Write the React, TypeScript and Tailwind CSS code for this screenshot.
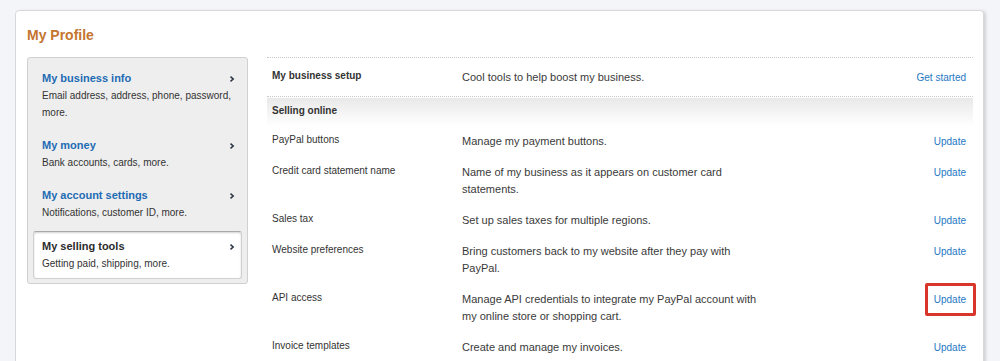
import React from 'react'

const sideItems = [
  { title: 'My business info', desc: 'Email address, address, phone, password, more.' },
  { title: 'My money', desc: 'Bank accounts, cards, more.' },
  { title: 'My account settings', desc: 'Notifications, customer ID, more.' },
  { title: 'My selling tools', desc: 'Getting paid, shipping, more.', active: true },
]

const sellingRows = [
  { label: 'PayPal buttons', desc: 'Manage my payment buttons.' },
  { label: 'Credit card statement name', desc: 'Name of my business as it appears on customer card statements.' },
  { label: 'Sales tax', desc: 'Set up sales taxes for multiple regions.' },
  { label: 'Website preferences', desc: 'Bring customers back to my website after they pay with PayPal.' },
  { label: 'API access', desc: 'Manage API credentials to integrate my PayPal account with my online store or shopping cart.', marked: true },
  { label: 'Invoice templates', desc: 'Create and manage my invoices.' },
]

function Chevron() {
  return (
    <svg width="6" height="8" viewBox="0 0 6 8" className="mr-[1px] mt-[5px] shrink-0">
      <polyline points="1.5,1.6 4.2,4 1.5,6.4" fill="none" stroke="#2a3340" strokeWidth="1.5" />
    </svg>
  )
}

function SideItem({ title, desc, active }: { title: string; desc: string; active?: boolean }) {
  return (
    <div
      className={
        active
          ? 'mt-[2px] rounded-[3px] border border-[#d0d0d0] border-t-[#a9a9a9] bg-white py-[6px] pl-[8px] pr-[5px] shadow-[inset_0_1px_2px_rgba(0,0,0,0.18)]'
          : 'border border-transparent py-[7px] pl-[8px] pr-[5px]'
      }
    >
      <div className="flex items-start justify-between">
        <span className={`text-[11px] font-bold leading-[17px] ${active ? 'text-[#2c2c2c]' : 'text-[#1d6bb4]'}`}>{title}</span>
        <Chevron />
      </div>
      <p className="text-[10px] leading-[17px] text-[#333]">{desc}</p>
    </div>
  )
}

function TableRow({ label, desc, action, bold, marked }: { label: string; desc?: string; action?: string; bold?: boolean; marked?: boolean }) {
  return (
    <div className="flex items-start py-[7px]">
      <div className={`w-[195px] shrink-0 pl-[5px] text-[10px] leading-[13px] text-[#333] ${bold ? 'font-bold' : ''}`}>{label}</div>
      <div className="w-[296px] shrink-0 text-[11px] leading-[17px] text-[#3a3a3a]">{desc}</div>
      <div className="flex flex-1 justify-end pr-[7px]">
        <span className="relative text-[10px] leading-[17px] text-[#2577c4]">
          {action}
          {marked && (
            <span className="absolute -bottom-[8px] -left-[9px] -right-[10px] -top-[8px] rounded-[2px] border-[3px] border-[#d9362b]" />
          )}
        </span>
      </div>
    </div>
  )
}

export default function App() {
  return (
    <div className="h-[361px] overflow-hidden bg-[#f4f5f8] pl-[15px] pr-[16px] pt-[10px] font-['Liberation_Sans',Arial,sans-serif]">
      <div className="min-h-[400px] rounded-[4px] border border-[#d8d8d8] bg-white pl-[11px] pr-[10px] pt-[14px] shadow-[2px_1px_3px_rgba(0,0,0,0.14)]">
        <h1 className="text-[14px] font-bold leading-[20px] text-[#c4752f]">My Profile</h1>

        <div className="mt-[12px] flex gap-[19px]">
          <aside className="w-[221px] shrink-0 self-start rounded-[3px] border border-[#d0d0d0] bg-[#eeeeee] px-[5px] pb-[4px] pt-[4px]">
            {sideItems.map(item => (
              <SideItem key={item.title} {...item} />
            ))}
          </aside>

          <div className="flex-1">
            <div className="border-y border-dotted border-[#c8c8c8] pb-[3px] pt-[4px]">
              <TableRow label="My business setup" desc="Cool tools to help boost my business." action="Get started" bold />
            </div>
            <div className="mt-[1px] h-[28px] bg-gradient-to-b from-[#e9e9e9] to-white pl-[5px] pt-[6px] text-[10px] font-bold leading-[13px] text-[#333]">
              Selling online
            </div>
            {sellingRows.map(row => (
              <TableRow key={row.label} label={row.label} desc={row.desc} action="Update" marked={row.marked} />
            ))}
          </div>
        </div>
      </div>
    </div>
  )
}
